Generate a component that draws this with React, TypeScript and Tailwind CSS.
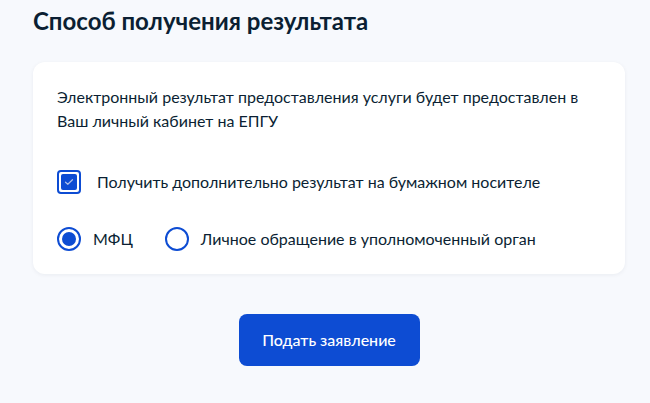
import React from "react";

const font = { fontFamily: "Lato, 'Noto Sans', sans-serif" };

function Checkbox() {
  return (
    <span className="flex h-6 w-6 shrink-0 items-center justify-center rounded-[4px] border-2 border-[#0d4cd3] bg-white">
      <span className="flex h-4 w-4 items-center justify-center rounded-[2px] bg-[#0d4cd3]">
        <svg width="10" height="8" viewBox="0 0 10 8" fill="none">
          <path d="M1.5 4.2L3.8 6.3L8.5 1.7" stroke="#aebfe6" strokeWidth="1.2" strokeLinecap="round" strokeLinejoin="round" />
        </svg>
      </span>
    </span>
  );
}

function Radio({ checked }: { checked?: boolean }) {
  return (
    <span className="flex h-6 w-6 shrink-0 items-center justify-center rounded-full border-2 border-[#0d4cd3] bg-white">
      {checked && <span className="h-[14px] w-[14px] rounded-full bg-[#0d4cd3]" />}
    </span>
  );
}

export default function App() {
  return (
    <div className="min-h-[403px] bg-[#f7f9fd] px-[33px] pt-[5px] text-[#0b1f33]" style={font}>
      <h2 className="text-[24px] font-bold leading-[32px]">Способ получения результата</h2>

      <div className="mt-[25px] w-[592px] rounded-xl bg-white px-6 pt-[23px] pb-[23px] shadow-[0_1px_4px_rgba(11,31,51,0.06)]">
        <p className="text-[16px] leading-[24px]">
          Электронный результат предоставления услуги будет предоставлен в Ваш личный кабинет на ЕПГУ
        </p>

        <label className="mt-[37px] flex items-center gap-4">
          <Checkbox />
          <span className="text-[16px] leading-[24px]">Получить дополнительно результат на бумажном носителе</span>
        </label>

        <div className="mt-[33px] flex items-center">
          <label className="flex items-center gap-3">
            <Radio checked />
            <span className="text-[16px] leading-[24px]">МФЦ</span>
          </label>
          <label className="ml-8 flex items-center gap-3">
            <Radio />
            <span className="text-[16px] leading-[24px]">Личное обращение в уполномоченный орган</span>
          </label>
        </div>
      </div>

      <div className="mt-[40px] flex w-[592px] justify-center">
        <button className="h-[52px] w-[181px] rounded-lg bg-[#0d4cd3] text-[16px] font-medium text-white">
          Подать заявление
        </button>
      </div>
    </div>
  );
}
